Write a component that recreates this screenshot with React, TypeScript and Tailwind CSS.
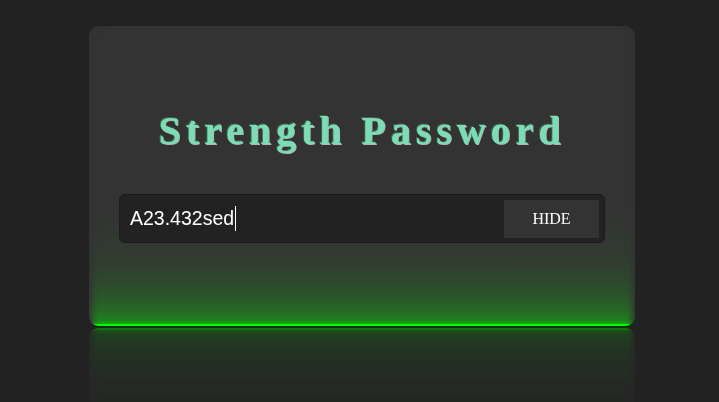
export default function App() {
  return (
    <div className="min-h-screen w-full bg-[#222] flex justify-center pl-[5px] pt-[26px] overflow-hidden">
      <div className="relative w-[546px] h-[300px] shrink-0 rounded-[10px] overflow-hidden bg-[#333] bg-[linear-gradient(to_top,rgba(0,255,0,0.45)_0%,rgba(0,255,0,0.27)_5%,rgba(0,255,0,0.166)_10%,rgba(0,255,0,0.1)_15%,rgba(0,255,0,0.06)_20%,rgba(0,255,0,0.035)_25%,rgba(0,255,0,0.015)_33%,transparent_42%)] shadow-[inset_7px_0_6px_-4px_#333,inset_-7px_0_6px_-4px_#333] [-webkit-box-reflect:below_2px_linear-gradient(transparent_40%,rgba(0,0,0,0.35))] flex flex-col px-[30px] pt-[85px]">
        <h1 className="text-center text-[40px] leading-none font-bold tracking-[4.95px] text-[#7ddbb5] font-['Liberation_Serif','Times_New_Roman',serif] [text-shadow:-1px_-1px_0_#237652,1px_1px_0_#b3b3b3]">
          Strength Password
        </h1>
        <div className="mt-[43px] h-[49px] flex items-center rounded-[6px] border border-[#1b1b1b] bg-[#222] pl-[10px] pr-[5px]">
          <div className="flex-1 flex items-center text-white text-[19.5px] font-['Liberation_Sans',Arial,sans-serif]">
            <span>A23.432sed</span>
            <span className="ml-[1px] w-px h-[25px] bg-white" />
          </div>
          <button className="w-[95px] h-[38px] bg-[#333] text-white text-[16px] uppercase font-['Liberation_Serif','Times_New_Roman',serif]">
            Hide
          </button>
        </div>
        <div className="absolute left-0 right-0 bottom-0 h-[2px] bg-[#00ff00] shadow-[0_0_4px_#00ff00]" />
      </div>
    </div>
  );
}
